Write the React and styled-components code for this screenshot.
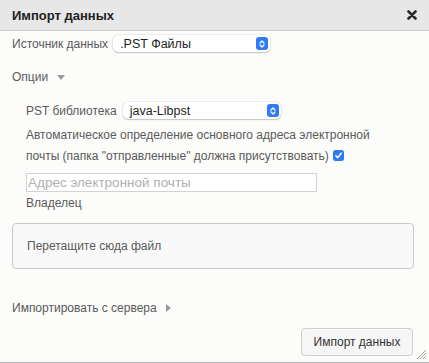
import styled, { createGlobalStyle } from "styled-components";

const Global = createGlobalStyle`
  html, body {
    margin: 0;
    padding: 0;
    background: #ffffff;
  }
  body {
    font-family: "Liberation Sans", Arial, sans-serif;
  }
`;

const Dialog = styled.div`
  position: relative;
  width: 429px;
  height: 363px;
  box-sizing: border-box;
  background: #fcfcfb;
  border-bottom: 1px solid #b9b9b9;
  display: flex;
  flex-direction: column;
`;

const TitleBar = styled.div`
  height: 31px;
  flex-shrink: 0;
  box-sizing: border-box;
  background: #e7e7e7;
  border-bottom: 1px solid #cdcdcd;
  display: flex;
  align-items: center;
  justify-content: space-between;
  padding: 0 12px 0 12px;
`;

const Title = styled.div`
  font-size: 13px;
  font-weight: 700;
  color: #222;
`;

const Body = styled.div`
  display: flex;
  flex-direction: column;
  padding: 2px 15px 0 12px;
`;

const Row = styled.div`
  display: flex;
  align-items: center;
  gap: ${(p) => p.$gap || 5}px;
  margin-top: ${(p) => p.$top || 0}px;
  height: 17px;
`;

const Label = styled.span`
  font-size: 12px;
  color: #5a5a5a;
  white-space: nowrap;
`;

const Select = styled.div`
  width: ${(p) => p.$width}px;
  height: 17px;
  box-sizing: border-box;
  background: #fff;
  border-radius: 5px;
  box-shadow: 0 0 0 0.5px rgba(0, 0, 0, 0.12), 0 1px 1.5px rgba(0, 0, 0, 0.18);
  display: flex;
  align-items: center;
  justify-content: space-between;
  padding: 0 2px 0 7px;
  font-size: 12.5px;
  color: #1e1e1e;
`;

const Stepper = styled.span`
  width: 12px;
  height: 13px;
  border-radius: 3px;
  background: #2f7bf5;
  display: flex;
  align-items: center;
  justify-content: center;
`;

const Toggle = styled.div`
  display: flex;
  align-items: center;
  gap: 9px;
  height: 16px;
  margin-top: ${(p) => p.$top}px;
  font-size: 12px;
  color: #5a5a5a;
`;

const Indent = styled.div`
  display: flex;
  flex-direction: column;
  padding-left: 14px;
`;

const Paragraph = styled.p`
  margin: 6px 0 0;
  max-width: 352px;
  font-size: 12px;
  line-height: 21px;
  color: #5a5a5a;
`;

const Check = styled.span`
  display: inline-flex;
  vertical-align: middle;
  margin-left: 4px;
  margin-top: -3px;
  width: 11px;
  height: 11px;
  border-radius: 2.5px;
  background: #2f7bf5;
  align-items: center;
  justify-content: center;
`;

const EmailInput = styled.input`
  margin-top: 6px;
  width: 291px;
  height: 19px;
  box-sizing: border-box;
  border: 1px solid #d2d2d2;
  background: #fff;
  padding: 0 1px;
  font-family: inherit;
  font-size: 13.5px;
  color: #222;
  outline: none;
  &::placeholder {
    color: #b0b0b0;
  }
`;

const Caption = styled.div`
  margin-top: 3px;
  height: 16px;
  line-height: 16px;
  font-size: 12px;
  color: #5a5a5a;
`;

const DropZone = styled.div`
  margin-top: 12px;
  height: 46px;
  box-sizing: border-box;
  border: 1px solid #c9c9c9;
  border-radius: 4px;
  background: #f9f9f9;
  display: flex;
  align-items: center;
  padding-left: 14px;
  font-size: 12px;
  color: #5a5a5a;
`;

const Footer = styled.div`
  display: flex;
  justify-content: flex-end;
  margin-top: 12px;
`;

const Button = styled.button`
  height: 28px;
  width: 112px;
  margin-right: 1px;
  box-sizing: border-box;
  border: 1px solid #cfcfcf;
  border-radius: 4px;
  background: #f6f6f6;
  font-family: inherit;
  font-size: 12px;
  color: #333;
  padding: 0;
`;

const Grip = styled.svg`
  position: absolute;
  right: 2px;
  bottom: 2px;
`;

const StepIcon = () => (
  <svg width="8" height="10" viewBox="0 0 8 10">
    <path d="M2 4 L4 2 L6 4 M2 6 L4 8 L6 6" fill="none" stroke="#fff" strokeWidth="1.3" strokeLinecap="round" strokeLinejoin="round" />
  </svg>
);

const CaretDown = () => (
  <svg width="8" height="5" viewBox="0 0 8 5">
    <path d="M0 0 H8 L4 5 Z" fill="#9a9a9a" />
  </svg>
);

const CaretRight = () => (
  <svg width="5" height="8" viewBox="0 0 5 8">
    <path d="M0 0 V8 L5 4 Z" fill="#9a9a9a" />
  </svg>
);

export default function App() {
  return (
    <>
      <Global />
      <Dialog>
        <TitleBar>
          <Title>Импорт данных</Title>
          <svg width="10" height="10" viewBox="0 0 10 10">
            <path d="M1.5 1.5 L8.5 8.5 M8.5 1.5 L1.5 8.5" stroke="#2a2a2a" strokeWidth="2.6" strokeLinecap="round" />
          </svg>
        </TitleBar>
        <Body>
          <Row $top={2}>
            <Label>Источник данных</Label>
            <Select $width={157}>
              <span>.PST Файлы</span>
              <Stepper><StepIcon /></Stepper>
            </Select>
          </Row>

          <Toggle $top={17}>
            Опции <CaretDown />
          </Toggle>

          <Indent>
            <Row $top={17} $gap={6}>
              <Label>PST библиотека</Label>
              <Select $width={158}>
                <span>java-Libpst</span>
                <Stepper><StepIcon /></Stepper>
              </Select>
            </Row>
            <Paragraph>
              Автоматическое определение основного адреса электронной почты
              (папка "отправленные" должна присутствовать)
              <Check>
                <svg width="9" height="9" viewBox="0 0 9 9">
                  <path d="M1.8 4.8 L3.7 6.6 L7.2 2.2" fill="none" stroke="#fff" strokeWidth="1.5" strokeLinecap="round" strokeLinejoin="round" />
                </svg>
              </Check>
            </Paragraph>
            <EmailInput placeholder="Адрес электронной почты" />
            <Caption>Владелец</Caption>
          </Indent>

          <DropZone>Перетащите сюда файл</DropZone>

          <Toggle $top={31}>
            Импортировать с сервера <CaretRight />
          </Toggle>

          <Footer>
            <Button>Импорт данных</Button>
          </Footer>
        </Body>
        <Grip width="10" height="10" viewBox="0 0 10 10">
          <path d="M9 3 L3 9 M9 6 L6 9 M9 0 L0 9" stroke="#8a8a8a" strokeWidth="0.8" />
        </Grip>
      </Dialog>
    </>
  );
}
